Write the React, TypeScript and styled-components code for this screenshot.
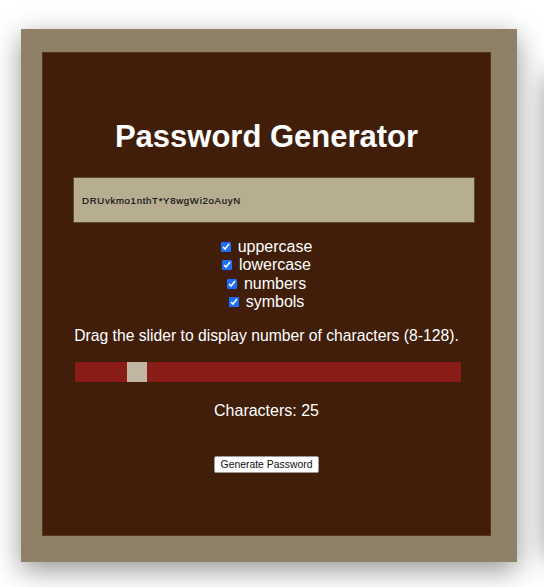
import React, { useState } from "react";
import styled, { createGlobalStyle } from "styled-components";

const Global = createGlobalStyle`
  html, body {
    margin: 0;
    padding: 0;
    background: #ffffff;
    overflow: hidden;
  }
  body {
    font-family: "Liberation Sans", Arial, Helvetica, sans-serif;
  }
`;

const Page = styled.div`
  position: relative;
  width: 544px;
  height: 587px;
  padding: 29px 0 0 21px;
  box-sizing: border-box;
  overflow: hidden;
`;

const NeighbourShadow = styled.div`
  position: absolute;
  left: 548px;
  top: 70px;
  width: 300px;
  height: 480px;
  background: #ffffff;
  box-shadow: 0 6px 26px rgba(0, 0, 0, 0.5);
`;

const Frame = styled.div`
  position: relative;
  width: 496px;
  height: 533px;
  box-sizing: border-box;
  padding: 23px 26px 26px 21px;
  background: #8f8167;
  box-shadow: 0 8px 26px rgba(0, 0, 0, 0.42);
`;

const Card = styled.div`
  height: 100%;
  box-sizing: border-box;
  background: #401e0a;
  border: 1px solid #5a3415;
  display: flex;
  flex-direction: column;
  align-items: center;
  color: #ffffff;
`;

const Title = styled.h1`
  margin: 66px 0 0;
  font-size: 31px;
  line-height: 36px;
  font-weight: 700;
  color: #ffffff;
`;

const PasswordBox = styled.div`
  align-self: flex-start;
  margin: 22px 0 0 30px;
  width: 402px;
  height: 46px;
  box-sizing: border-box;
  background: #b7ae92;
  border: 1px solid #5e4a30;
  display: flex;
  align-items: center;
  padding-left: 8px;
  font-size: 9.6px;
  letter-spacing: 0.7px;
  color: #121010;
  -webkit-text-stroke: 0.2px #121010;
`;

const Options = styled.div`
  margin-top: 15px;
  display: flex;
  flex-direction: column;
  align-items: center;
`;

const Option = styled.label`
  display: flex;
  align-items: center;
  gap: 7px;
  height: 18.33px;
  font-size: 16px;
  line-height: 18.33px;
  color: #ffffff;
`;

const Check = styled.input`
  margin: 0;
  width: 10px;
  height: 10px;
  accent-color: #1a6dff;
`;

const Hint = styled.p`
  margin: 16px 0 0;
  font-size: 15.7px;
  line-height: 18.4px;
  color: #ffffff;
`;

const Range = styled.input`
  -webkit-appearance: none;
  appearance: none;
  margin: 16.6px 0 0 3px;
  width: 386px;
  height: 20px;
  background: #8a1c17;
  outline: none;
  &::-webkit-slider-thumb {
    -webkit-appearance: none;
    appearance: none;
    width: 20px;
    height: 20px;
    background: #c1b6a1;
    border: none;
    cursor: pointer;
  }
`;

const Count = styled.p`
  margin: 19.3px 0 0;
  font-size: 16px;
  line-height: 18.4px;
  color: #ffffff;
`;

const GenerateButton = styled.button`
  margin-top: 36.3px;
  height: 17px;
  width: 105px;
  padding: 0;
  box-sizing: border-box;
  background: #ffffff;
  border: 1px solid #9a9a9a;
  border-radius: 2px;
  font-family: "Liberation Sans", Arial, sans-serif;
  font-size: 10.4px;
  color: #111111;
  line-height: 15px;
`;

const options = ["uppercase", "lowercase", "numbers", "symbols"];

export default function App() {
  const [len, setLen] = useState(25);
  return (
    <Page>
      <Global />
      <NeighbourShadow />
      <Frame>
        <Card>
          <Title>Password Generator</Title>
          <PasswordBox>DRUvkmo1nthT*Y8wgWi2oAuyN</PasswordBox>
          <Options>
            {options.map((o) => (
              <Option key={o}>
                <Check type="checkbox" defaultChecked />
                {o}
              </Option>
            ))}
          </Options>
          <Hint>Drag the slider to display number of characters (8-128).</Hint>
          <Range
            type="range"
            min={8}
            max={128}
            value={len}
            onChange={(e) => setLen(Number(e.target.value))}
          />
          <Count>Characters: {len}</Count>
          <GenerateButton>Generate Password</GenerateButton>
        </Card>
      </Frame>
    </Page>
  );
}
